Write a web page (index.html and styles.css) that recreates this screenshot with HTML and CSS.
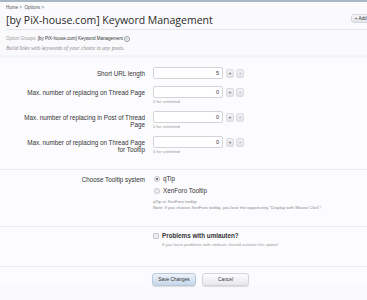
FILE: index.html
```html
<!DOCTYPE html>
<html>
<head>
<meta charset="utf-8">
<link rel="stylesheet" href="styles.css">
</head>
<body>
<div class="topbar"></div>
<div class="breadcrumb"><span>Home</span> &gt; &nbsp;<span>Options</span> &gt;</div>
<div class="titlebar">
  <h1 class="title">[by PiX-house.com] Keyword Management</h1>
  <a class="addbtn">+ Add Option</a>
</div>
<div class="groups"><span class="muted">Option Groups:</span> <span>[by PiX-house.com] Keyword Management</span> <span class="circ">&#9662;</span></div>
<div class="desc">Build links with keywords of your choice in any posts.</div>

<form class="form">
  <div class="section first">
    <div class="row">
      <div class="label">Short URL length</div>
      <div class="ctrl">
        <div class="spin"><span class="input">5</span><span class="sbtn">+</span><span class="sbtn">-</span></div>
      </div>
    </div>
    <div class="row">
      <div class="label">Max. number of replacing on Thread Page</div>
      <div class="ctrl">
        <div class="spin"><span class="input">0</span><span class="sbtn">+</span><span class="sbtn">-</span></div>
        <div class="hint">0 for unlimited</div>
      </div>
    </div>
    <div class="row">
      <div class="label">Max. number of replacing in Post of Thread Page</div>
      <div class="ctrl">
        <div class="spin"><span class="input">0</span><span class="sbtn">+</span><span class="sbtn">-</span></div>
        <div class="hint">0 for unlimited</div>
      </div>
    </div>
    <div class="row">
      <div class="label">Max. number of replacing on Thread Page for Tooltip</div>
      <div class="ctrl">
        <div class="spin"><span class="input">0</span><span class="sbtn">+</span><span class="sbtn">-</span></div>
        <div class="hint">0 for unlimited</div>
      </div>
    </div>
  </div>

  <div class="section second">
    <div class="row">
      <div class="label">Choose Tooltip system</div>
      <div class="ctrl">
        <div class="choice"><span class="radio on"></span>qTip</div>
        <div class="choice"><span class="radio"></span>XenForo Tooltip</div>
        <div class="hint hint2">qTip or XenForo tooltip<br>Note: If you choose XenForo tooltip, you lose the opportunity "Display with Mouse Click"!</div>
      </div>
    </div>
  </div>

  <div class="section third">
    <div class="row">
      <div class="label"></div>
      <div class="ctrl">
        <div class="choice bold"><span class="check"></span>Problems with umlauten?</div>
        <div class="hint hint3">If you have problems with umlauts should activate this option!</div>
      </div>
    </div>
  </div>

  <div class="section buttons">
    <div class="row">
      <div class="label"></div>
      <div class="ctrl btns">
        <span class="btn primary">Save Changes</span>
        <span class="btn">Cancel</span>
      </div>
    </div>
  </div>
</form>
</body>
</html>
```
FILE: styles.css
```css
html, body {
  margin: 0;
  padding: 0;
  background: #fafafc;
  overflow: hidden;
  width: 367px;
  height: 300px;
}
body {
  font-family: "Liberation Sans", Arial, sans-serif;
  color: #333;
}
.topbar {
  height: 2px;
  background: #a9b6c4;
}
.breadcrumb {
  font-size: 4.5px;
  line-height: 5px;
  color: #555;
  padding: 3px 0 0 6px;
  height: 5px;
}
.titlebar {
  display: flex;
  justify-content: space-between;
  align-items: center;
  margin: 0 0 0 6px;
  height: 19px;
  border-bottom: 1px solid #e6e8ee;
  white-space: nowrap;
  overflow: hidden;
}
.title {
  margin: 0;
  font-family: "Open Sans", sans-serif;
  font-weight: normal;
  font-size: 10.5px;
  color: #2a2a2a;
  line-height: 14px;
}
.addbtn {
  font-size: 4.5px;
  color: #333;
  background: linear-gradient(#f6f6f9, #e4e5ea);
  border: 1px solid #d8d9df;
  border-radius: 3px;
  padding: 1px 3px;
  margin-right: -18px;
  margin-top: -2px;
}
.groups {
  font-size: 4.5px;
  line-height: 6px;
  padding: 6px 0 0 6px;
  color: #333;
}
.groups .muted { color: #999; }
.circ {
  display: inline-block;
  width: 4px;
  height: 4px;
  border: 1px solid #999;
  border-radius: 50%;
  font-size: 3px;
  line-height: 4px;
  text-align: center;
  color: #777;
  vertical-align: middle;
}
.desc {
  font-family: "Liberation Serif", serif;
  font-style: italic;
  font-size: 5.5px;
  color: #888;
  padding: 3px 0 0 6px;
  line-height: 7px;
}
.form {
  margin-top: 3px;
  background: #fcfcfe;
  border-top: 3px solid #f1f4f9;
}
.section {
  border-bottom: 1px solid #e7eef6;
}
.section.first { padding-top: 9px; padding-bottom: 15px; }
.section.second { padding-top: 5px; padding-bottom: 15px; }
.section.third { padding-top: 5px; padding-bottom: 19px; }
.section.buttons { border-bottom: none; padding-top: 6px; }
.row {
  display: flex;
  gap: 8px;
  margin-bottom: 7px;
}
.section .row:last-child { margin-bottom: 0; }
.label {
  box-sizing: border-box;
  width: 145px;
  flex: none;
  text-align: right;
  font-size: 6.3px;
  line-height: 7px;
  padding: 2.5px 0 0 22px;
  color: #333;
}
.second .label { padding-top: 0.5px; }
.ctrl {
  flex: 1;
}
.spin {
  display: flex;
  align-items: center;
  height: 12px;
}
.input {
  box-sizing: border-box;
  width: 70px;
  height: 12px;
  background: #fff;
  border: 1px solid #d2d4da;
  border-radius: 2px;
  font-size: 5.5px;
  line-height: 10px;
  text-align: right;
  padding-right: 3px;
  color: #333;
  margin-right: 3px;
}
.sbtn {
  box-sizing: border-box;
  width: 8px;
  height: 9px;
  background: linear-gradient(#f1f1f5, #e2e3e8);
  border: 1px solid #dcdde2;
  border-radius: 2px;
  font-size: 5px;
  line-height: 7px;
  text-align: center;
  color: #555;
  margin-right: 2px;
}
.hint {
  font-size: 4.3px;
  line-height: 5px;
  color: #999;
  padding-top: 1px;
}
.choice {
  display: flex;
  align-items: center;
  font-size: 6.3px;
  line-height: 8px;
  height: 8px;
  margin-bottom: 4px;
  color: #333;
  white-space: nowrap;
}
.choice.bold { font-weight: bold; margin-bottom: 2px; }
.radio {
  box-sizing: border-box;
  width: 6px;
  height: 6px;
  border-radius: 50%;
  border: 1px solid #c4c6cc;
  background: #eeeff2;
  margin: 0 3px 0 1px;
  position: relative;
}
.radio.on::after {
  content: "";
  position: absolute;
  left: 1px;
  top: 1px;
  width: 2px;
  height: 2px;
  border-radius: 50%;
  background: #555;
}
.check {
  box-sizing: border-box;
  width: 6px;
  height: 6px;
  border: 1px solid #c4c6cc;
  border-radius: 1px;
  background: #eeeff2;
  margin: 0 3px 0 0;
}
.hint2 { padding-top: 0; line-height: 6px; color: #888; white-space: nowrap; }
.hint3 { padding-left: 9px; padding-top: 0; white-space: nowrap; }
.btns {
  display: flex;
  gap: 6px;
  margin-left: -1px;
}
.btn {
  box-sizing: border-box;
  height: 13px;
  width: 47px;
  border-radius: 3px;
  background: linear-gradient(#fdfdfe, #e6e7ec);
  border: 1px solid #d3d5db;
  box-shadow: 0 1px 1px rgba(0,0,0,0.12);
  font-size: 4.8px;
  line-height: 11px;
  text-align: center;
  color: #333;
}
.btn.primary {
  width: 44px;
  background: linear-gradient(#eef3f9, #c4d7ea);
  border-color: #bac9d9;
}
```
